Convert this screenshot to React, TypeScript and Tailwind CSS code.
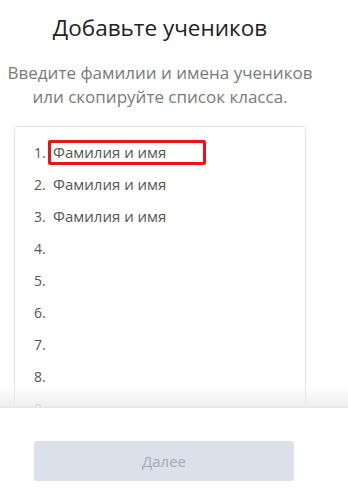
const rows = Array.from({ length: 9 }, (_, i) => i + 1);

export default function App() {
  return (
    <div className="relative h-[500px] w-[348px] overflow-hidden bg-white font-['Open_Sans',sans-serif]">
      {/* Header */}
      <div className="w-[320px] pt-[12px] text-center">
        <h1 className="text-[22.5px] leading-[32px] text-[#222]">Добавьте учеников</h1>
        <p className="mt-[17px] text-[17px] leading-[24px] text-[#7a7a7a]">
          Введите фамилии и имена учеников
          <br />
          или скопируйте список класса.
        </p>
      </div>

      {/* List card */}
      <div className="ml-[14px] mt-[17px] h-[400px] w-[292px] rounded-[4px] border border-[#e3e3e3] pt-[9px]">
        {rows.map((n) => (
          <div key={n} className="flex h-[32px] items-center pl-[19px] text-[15px] text-[#555]">
            <span className="w-[18px] text-[14px]">{n}.</span>
            {n <= 3 && (
              <span
                className={
                  n === 1
                    ? "-ml-[4px] flex h-[25px] w-[158px] items-center rounded-[2px] border-[3px] border-[#e8141b] pl-[2px]"
                    : "pl-[1px]"
                }
              >
                Фамилия и имя
              </span>
            )}
          </div>
        ))}
      </div>

      {/* Footer */}
      <div className="absolute bottom-0 left-0 h-[115px] w-full">
        <div className="h-[22px] bg-gradient-to-b from-white/0 to-[#ededed]/90" />
        <div className="h-[93px] border-t border-[#e6e6e6] bg-white pl-[34px] pt-[33px]">
          <button className="h-[40px] w-[260px] rounded-[3px] bg-[#dce0ea] text-[15px] text-[#a4a9b8]">
            Далее
          </button>
        </div>
      </div>
    </div>
  );
}
